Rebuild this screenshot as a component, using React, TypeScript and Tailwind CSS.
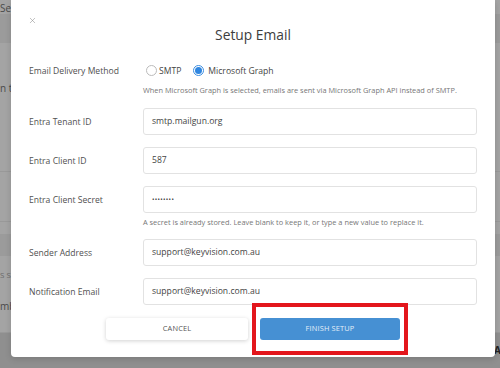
import { X } from "lucide-react";

const font = { fontFamily: '"Open Sans", "Liberation Sans", sans-serif' };

export default function App() {
  return (
    <div className="relative h-[368px] w-[500px] overflow-hidden bg-[#a4a4a4]" style={font}>
      <Backdrop />
      <SetupEmailModal />
    </div>
  );
}

function Backdrop() {
  return (
    <div className="flex h-full flex-col text-[10px] text-[#4a4a4a]">
      <div className="h-[14px] leading-[16px]">Server</div>
      <div className="h-[29px] bg-[#9b9b9b]" />
      <div className="h-[129px] border-b border-[#999] pt-[38px] leading-[14px]">n the</div>
      <div className="h-[50px] border-b border-[#999]" />
      <div className="mt-[12px] h-[22px] bg-[#9b9b9b]" />
      <div className="pt-[13px] text-[8px] leading-[12px] text-[#6a6a6a]">S SETTINGS</div>
      <div className="pt-[18px] leading-[14px]">mber</div>
      <div className="mt-[19px] border-b border-[#999]" />
      <div className="flex-1 bg-[#8f8f8f]" />
      <div className="absolute right-0 top-[343px] w-[6px] overflow-hidden text-[10px] font-bold leading-[14px] text-[#222]">
        A
      </div>
    </div>
  );
}

function SetupEmailModal() {
  return (
    <div className="absolute left-[11px] top-0 h-[357px] w-[484px] rounded-b-[4px] bg-white shadow-[0_2px_6px_rgba(0,0,0,0.15)]">
      <div className="relative">
        <button className="absolute left-[17px] top-[16px] text-[#8a8a8a]">
          <X size={9} strokeWidth={1.4} />
        </button>
        <h2 className="pt-[23px] text-center text-[13.8px] leading-[24px] text-[#3d3d3d]">Setup Email</h2>
      </div>

      <div className="relative px-[18px]">
        <div className="mt-[15px] flex items-center">
          <div className="w-[114px] text-[8.6px] leading-[18px] text-[#505050]">Email Delivery Method</div>
          <div className="flex items-center pl-[3px] text-[8.6px] text-[#444]">
            <span className="h-[11px] w-[11px] rounded-full border border-[#bbb] bg-white" />
            <span className="ml-[2px]">SMTP</span>
            <span className="ml-[12px] flex h-[11px] w-[11px] items-center justify-center rounded-full border border-[#3b8de0] bg-white">
              <span className="h-[7px] w-[7px] rounded-full bg-[#2f86e0]" />
            </span>
            <span className="ml-[4px]">Microsoft Graph</span>
          </div>
        </div>
        <p className="ml-[114px] mt-[3px] text-[7.4px] leading-[14px] text-[#777]">
          When Microsoft Graph is selected, emails are sent via Microsoft Graph API instead of SMTP.
        </p>

        <div className="mt-[11px] flex flex-col gap-[12px]">
          <Field label="Entra Tenant ID" value="smtp.mailgun.org" />
          <Field label="Entra Client ID" value="587" />
          <Field label="Entra Client Secret" value="••••••••" secret />
        </div>
        <p className="ml-[114px] mt-[2px] text-[7.4px] leading-[14px] text-[#777]">
          A secret is already stored. Leave blank to keep it, or type a new value to replace it.
        </p>

        <div className="mt-[10px] flex flex-col gap-[12px]">
          <Field label="Sender Address" value="support@keyvision.com.au" />
          <Field label="Notification Email" value="support@keyvision.com.au" />
        </div>

        <div className="relative mt-[13px] flex justify-center gap-[12px]">
          <button className="h-[22px] w-[142px] rounded-[3px] bg-white text-[7.4px] tracking-[0.02em] text-[#555] shadow-[0_1px_4px_rgba(0,0,0,0.18)]">
            CANCEL
          </button>
          <button className="h-[22px] w-[140px] rounded-[3px] bg-[#4690d3] text-[7.4px] tracking-[0.02em] text-[#e4eef8]">
            FINISH SETUP
          </button>
          <div className="pointer-events-none absolute left-[223px] top-[-15px] h-[52px] w-[156px] border-[4px] border-[#e3161c]" />
        </div>
      </div>
    </div>
  );
}

function Field({ label, value, secret }: { label: string; value: string; secret?: boolean }) {
  return (
    <div className="flex items-center">
      <div className="w-[114px] text-[8.6px] leading-[14px] text-[#505050]">{label}</div>
      <div className="flex h-[27px] flex-1 items-center rounded-[3px] border border-[#e2e2e2] px-[8px] text-[8.6px] text-[#444]">
        <span className={secret ? "text-[6.5px] tracking-[0.05em]" : ""}>{value}</span>
      </div>
    </div>
  );
}
